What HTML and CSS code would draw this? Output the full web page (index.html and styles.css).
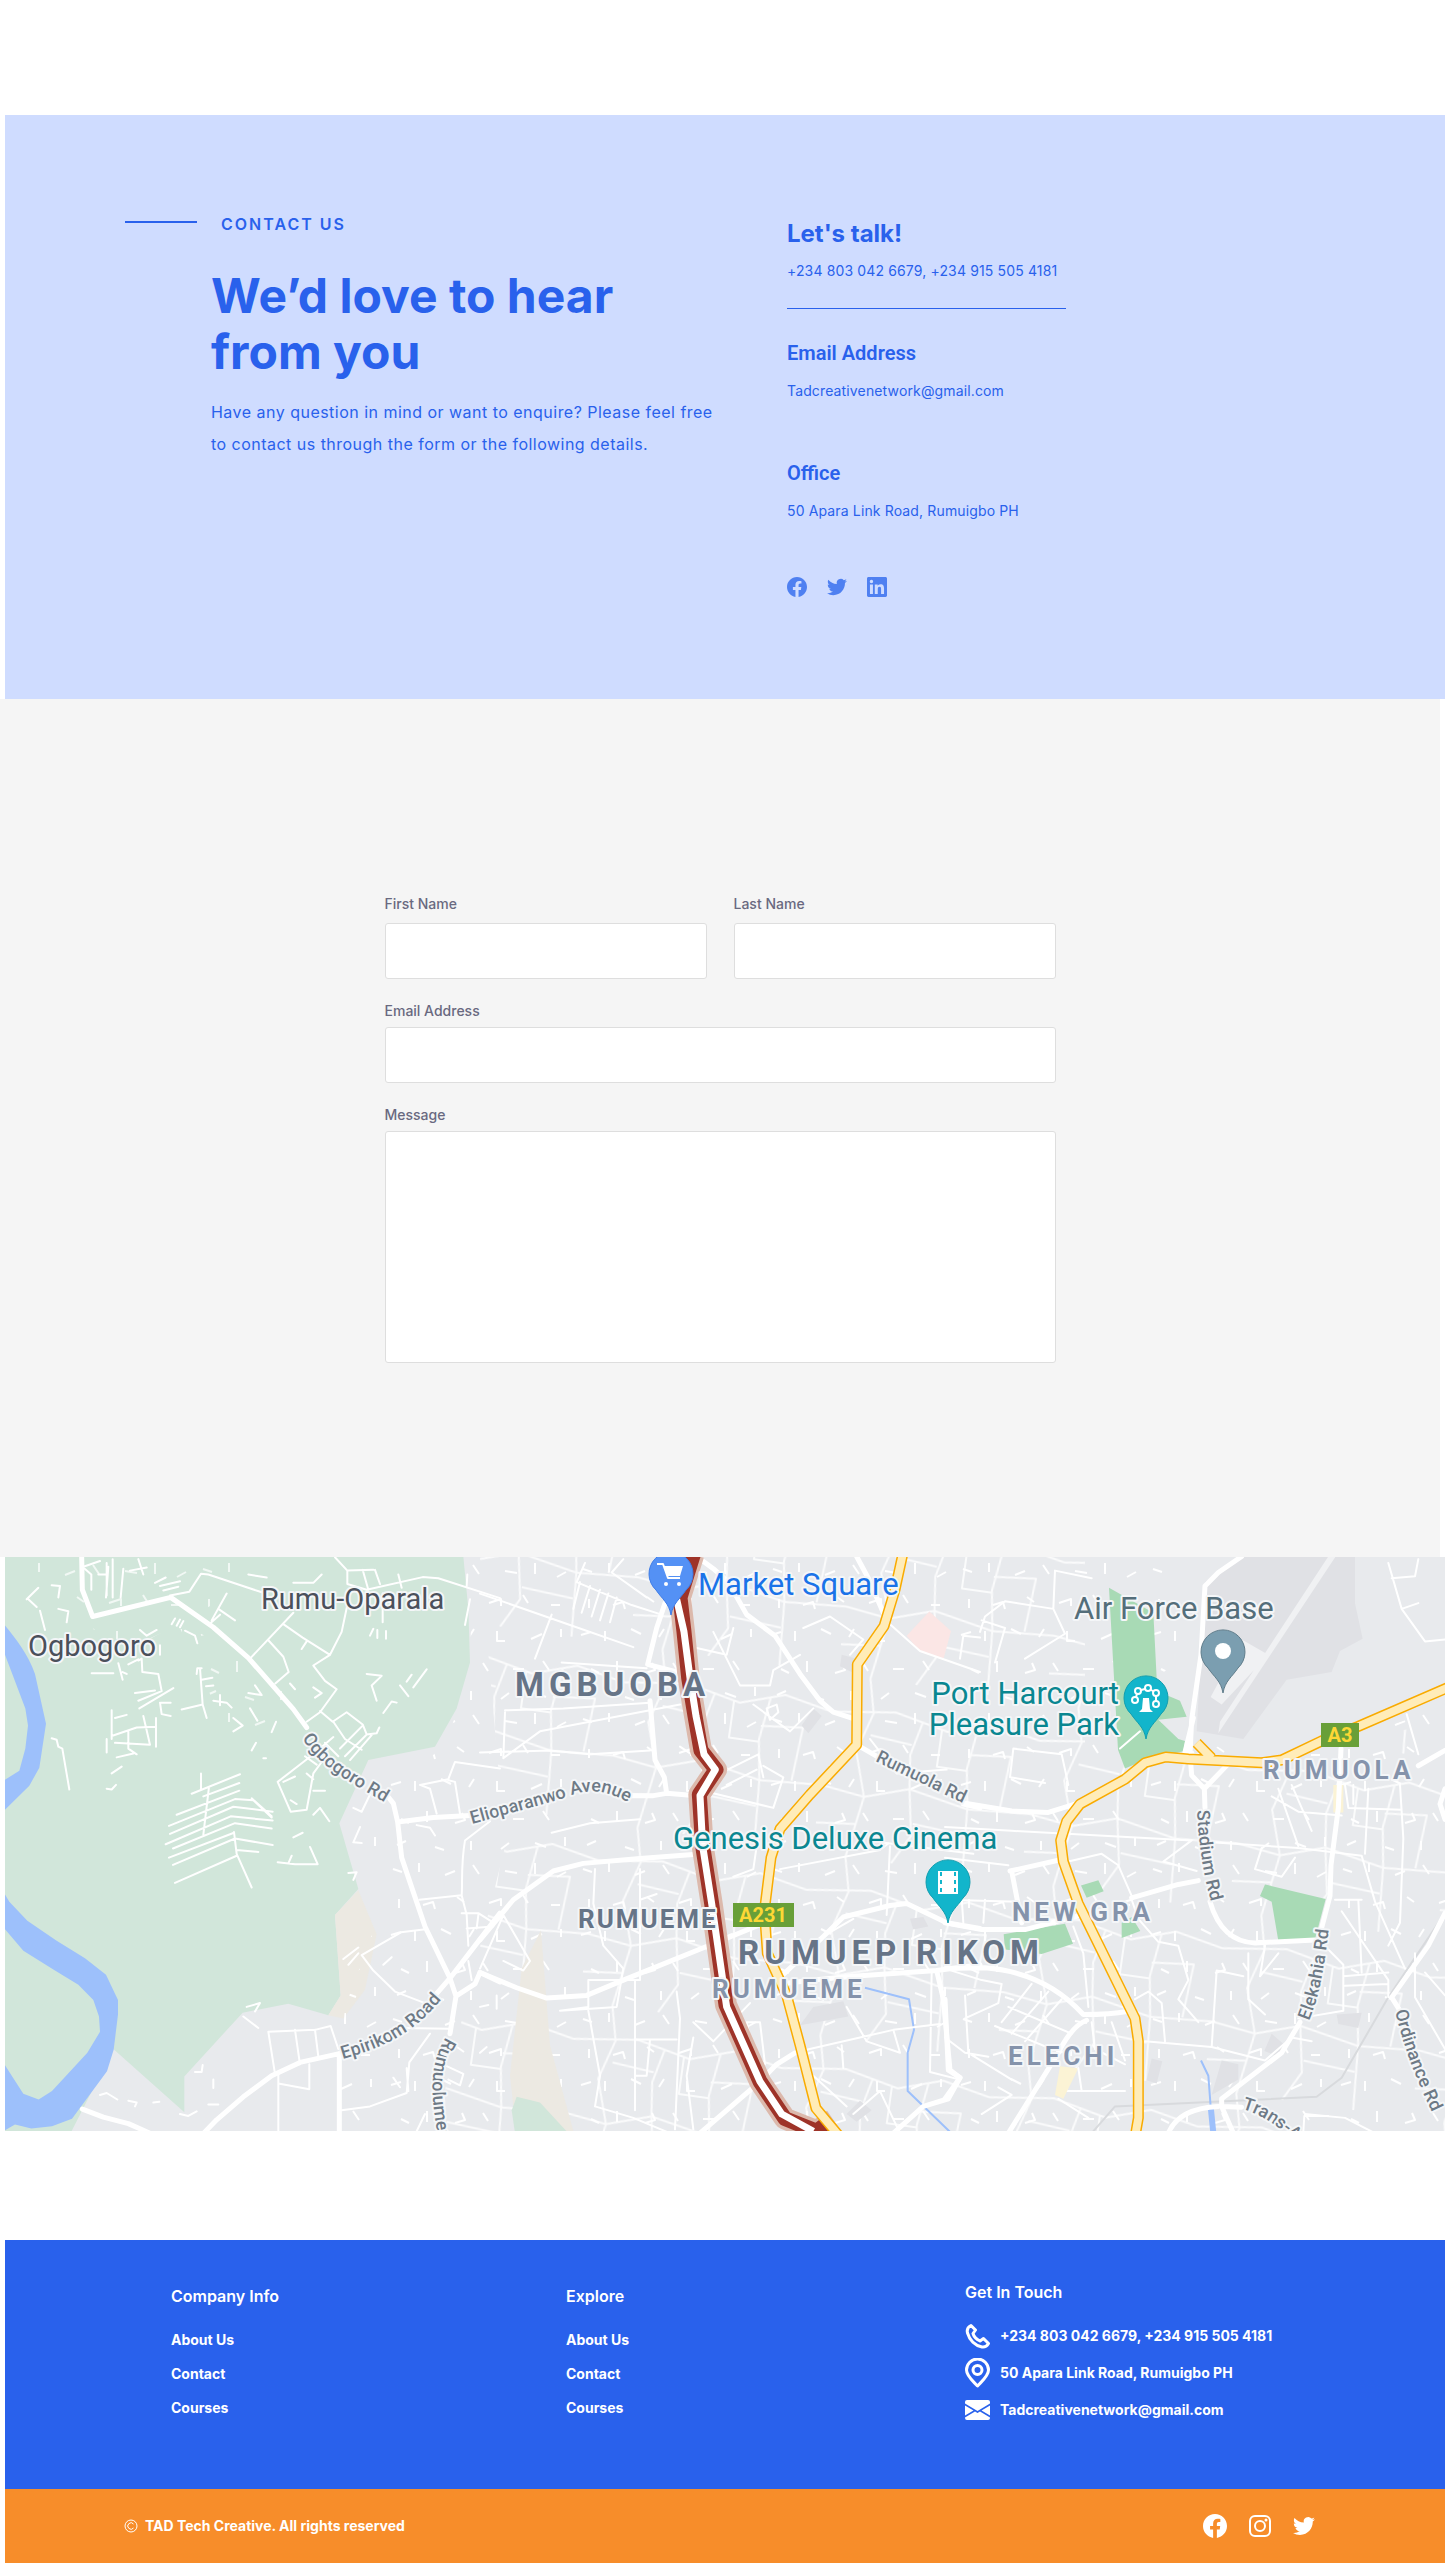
FILE: index.html
```html
<!DOCTYPE html>
<html lang="en">
<head>
<meta charset="utf-8">
<meta name="viewport" content="width=device-width, initial-scale=1">
<title>Contact us – TAD Tech Creative</title>
<link rel="stylesheet" href="styles.css">
</head>
<body>
<svg class="sprite" aria-hidden="true">
  <symbol id="facebook" viewBox="0 0 24 24"><path d="M24 12.073c0-6.627-5.373-12-12-12s-12 5.373-12 12c0 5.99 4.388 10.954 10.125 11.854v-8.385H7.078v-3.47h3.047V9.43c0-3.007 1.792-4.669 4.533-4.669 1.312 0 2.686.235 2.686.235v2.953H15.83c-1.491 0-1.956.925-1.956 1.874v2.25h3.328l-.532 3.47h-2.796v8.385C19.612 23.027 24 18.062 24 12.073z"/></symbol>
  <symbol id="twitter" viewBox="0 0 24 24"><path d="M23.953 4.57a10 10 0 01-2.825.775 4.958 4.958 0 002.163-2.723c-.951.555-2.005.959-3.127 1.184a4.92 4.92 0 00-8.384 4.482C7.69 8.095 4.067 6.13 1.64 3.162a4.822 4.822 0 00-.666 2.475c0 1.71.87 3.213 2.188 4.096a4.904 4.904 0 01-2.228-.616v.06a4.923 4.923 0 003.946 4.827 4.996 4.996 0 01-2.212.085 4.936 4.936 0 004.604 3.417 9.867 9.867 0 01-6.102 2.105c-.39 0-.779-.023-1.17-.067a13.995 13.995 0 007.557 2.209c9.053 0 13.998-7.496 13.998-13.985 0-.21 0-.42-.015-.63A9.935 9.935 0 0024 4.59z"/></symbol>
  <symbol id="linkedin" viewBox="0 0 24 24"><path d="M20.447 20.452h-3.554v-5.569c0-1.328-.027-3.037-1.852-3.037-1.853 0-2.136 1.445-2.136 2.939v5.667H9.351V9h3.414v1.561h.046c.477-.9 1.637-1.85 3.37-1.85 3.601 0 4.267 2.37 4.267 5.455v6.286zM5.337 7.433a2.062 2.062 0 01-2.063-2.065 2.064 2.064 0 112.063 2.065zm1.782 13.019H3.555V9h3.564v11.452zM22.225 0H1.771C.792 0 0 .774 0 1.729v20.542C0 23.227.792 24 1.771 24h20.451C23.2 24 24 23.227 24 22.271V1.729C24 .774 23.2 0 22.222 0h.003z"/></symbol>
</svg>

<main>
  <section class="hero">
    <div class="hero-intro">
      <p class="eyebrow"><span class="eyebrow-rule"></span>CONTACT US</p>
      <h1>We’d love to hear<br>from you</h1>
      <p class="lead">Have any question in mind or want to enquire? Please feel free to contact us through the form or the following details.</p>
    </div>
    <div class="hero-details">
      <h2>Let's talk!</h2>
      <p class="phones">+234 803 042 6679, +234 915 505 4181</p>
      <hr>
      <h3>Email Address</h3>
      <p class="detail">Tadcreativenetwork@gmail.com</p>
      <h3>Office</h3>
      <p class="detail">50 Apara Link Road, Rumuigbo PH</p>
      <div class="hero-social">
        <a href="#" aria-label="Facebook"><svg><use href="#facebook"/></svg></a>
        <a href="#" aria-label="Twitter"><svg><use href="#twitter"/></svg></a>
        <a href="#" aria-label="LinkedIn"><svg><use href="#linkedin"/></svg></a>
      </div>
    </div>
  </section>

  <section class="form-section">
    <form class="contact-form">
      <div class="form-row">
        <div class="field field-name"><label for="first">First Name</label><input id="first" type="text"></div>
        <div class="field field-name"><label for="last">Last Name</label><input id="last" type="text"></div>
      </div>
      <div class="field"><label for="email">Email Address</label><input id="email" type="email"></div>
      <div class="field"><label for="message">Message</label><textarea id="message"></textarea></div>
    </form>
  </section>

  <svg class="map" viewBox="0 0 1440 574" preserveAspectRatio="xMidYMid slice" role="img" aria-label="Map of Rumuigbo, Port Harcourt">
    <defs>
      <pattern id="lanes" width="190" height="150" patternUnits="userSpaceOnUse">
        <path class="lane" d="M8 12l9 3M34 6v9M60 18l10-4M88 8l6 9M120 14l12 2M150 6v11M172 20l9-5M14 42v9M38 48l10-3 2 7M72 40l7 5M104 46l12-4v7M138 38l5 8M166 48h9M6 78l10-3M30 84v-10M56 72l10 5M84 80l5-8M112 74v10h8M146 82l11-5M176 72v8M16 112l8 4M42 104v11M70 116l10-3-3-7M98 106l5 8M128 112h11M158 104l6 9M12 138l9-4M50 140l9 3M86 134v9M116 142l8-6M150 136l11 4M180 130v9"/>
      </pattern>
      <pattern id="blocks" width="210" height="180" patternUnits="userSpaceOnUse" patternTransform="rotate(8)">
        <path class="lane" d="M0 38L64 30 118 42 162 28 210 38M0 112L44 118 88 104 148 116 210 112M34 0L42 34 30 74 44 118 34 180M92 36L84 70 88 104 96 150 80 180M148 32L142 76 148 116 152 180M42 56L84 60M142 62L184 58 180 112M96 138L148 142M112 41V78H142M0 150L40 146"/>
      </pattern>
      <path id="pin" d="M0 42C-2 30-9 26-15 17A22 22 0 1 1 15 17C9 26 2 30 0 42Z"/>
      <path id="ogbogoro-rd" d="M297 181C318 214 345 224 392 253"/>
      <path id="epirikom-rd" d="M338 502C372 492 410 480 446 430"/>
      <path id="rumuolumeni-rd" d="M441 480C426 505 422 530 437 600"/>
      <path id="elioparanwo-av" d="M467 267L556 242C590 228 603 234 640 254"/>
      <path id="rumuola-rd" d="M870 204L970 252"/>
      <path id="stadium-rd" d="M1192 253C1194 290 1198 320 1212 366"/>
      <path id="elekahia-rd" d="M1304 464C1314 440 1320 410 1325 360"/>
      <path id="ordinance-rd" d="M1390 454C1400 495 1412 525 1436 574"/>
      <path id="trans-rd" d="M1237 552Q1262 558 1300 592"/>
    </defs>

    <rect width="1440" height="574" fill="#e8eaed"/>

    <!-- west: farmland, river, Ogbogoro -->
    <g class="sheet" transform="translate(-5 -17) scale(.33333 .3827)">
      <path fill="#d1e6da" d="M0 43H1390L1405 180 1410 320 1370 440 1305 540 1105 575 1018 740 1075 912 1005 980 1022 1190 985 1242 865 1212 728 1235 553 1402V1495L340 1330 200 1570H0Z"/>
      <path fill="#ece9e2" d="M1075 915L1005 980 1022 1190 985 1242 1030 1250 1095 1175 1130 1030Z"/>
      <path fill="#9dc0fb" d="M0 208C40 250 80 290 105 350L138 480 118 595 88 642 0 718V635L58 603 76 545 84 485 76 440 15 300 0 280Z"/>
      <path fill="#9dc0fb" d="M0 905L28 945 82 995 170 1047 255 1093 318 1136 354 1202V1240L341 1332 321 1388 216 1512 156 1532 94 1538 45 1527 0 1550V1352L70 1447 116 1462 156 1440 262 1340 300 1285 297 1245 280 1202 235 1162 160 1122 70 1073 0 1002Z"/>
      <path class="street" d="M250 70L300 55M320 60V145M338 50V150M295 90H320M318 150L325 70M370 75L362 150M254 75L274 90V130M390 80L440 72M415 50L430 90M480 120L540 108M465 112L497 98M490 132L535 122M510 145L568 135 603 88 625 90 790 138M745 90L800 98M880 112H940L965 90M1005 45L1042 80 1120 78M1042 80V115L1100 130 1268 97 1315 100 1500 152M1088 78L1105 130M1125 78L1140 115M1195 90L1205 125M1148 140V215M1402 90L1400 120M1410 155L1395 222M635 210L680 140M655 180L705 210M660 195L630 218M750 310L880 190M805 262L850 305 866 345 826 375M850 220L908 255 990 300 1025 240 1042 170M990 300L940 328 975 368 1010 390 960 450 920 475M905 285L920 265M80 155L115 125M85 155L110 175M120 185L135 235M155 118L180 120 175 150M175 180L205 186 200 215M420 235L440 250 470 235M415 315L425 310 427 345 475 350 485 395 415 420M480 275V300M275 348H340M355 322L368 365M385 325L415 312M380 350L368 345M600 335L608 430 545 443M590 350L592 335 605 335M608 430L620 465M605 365L637 360M618 382L640 380M405 400L465 393M418 440L520 387M480 425L485 455 512 460M483 425H512M335 445V520M345 465L380 457M335 512L410 490 468 488M345 530L450 535 430 460M385 500V545L410 560M468 465V540M350 568L400 558M320 520V555M155 518L170 522 175 540 187 545 208 652M603 610V650M575 663L720 612M610 670L718 635M627 645L610 770M530 718L718 655M507 747L705 677 760 680 815 725M510 768L700 697 818 710M497 795L692 722 818 733M519 806L705 740 815 754M507 830L702 765M519 849L705 780 818 797M525 896L710 825M702 763L710 820 755 908M710 810L775 815M755 675L815 722M833 842L885 847H953L930 802M865 845L875 825M880 777L908 765M960 447L998 475 1040 450 1088 482 1100 508 1130 505 1138 490M1000 475L1035 520 1085 548M1088 485L1020 545M1098 510L1035 565M1115 510L1050 575M1000 515L940 560 833 632 872 710 920 705 940 610 965 580M975 530L1015 565M915 565L950 587M850 632L885 618M920 610L940 625M872 680L890 690M940 655L975 655M940 718L960 700 988 735M1100 350L1145 355 1115 380 1130 420M1240 385L1280 338M1220 370L1235 352M1200 380L1225 408M1150 452L1175 422 1190 425M745 400L785 405 765 380M755 550L768 530M750 440L772 472M700 465L728 485 700 500M790 570H798M815 502L828 475M870 375L885 390M940 385L965 400 945 412M555 237L585 250 592 270M515 220L525 205M530 224L540 208M540 228L550 212M1110 250L1120 232M1132 256V235M1158 258V238M640 420L680 425 695 438M660 405V432M320 650L335 652 348 640M335 610L365 592"/>
      <path class="street" d="M1260 640L1345 625 1365 580 1500 597M1260 640L1290 650 1310 715M1345 628L1365 632 1380 715M1395 785L1470 735M1395 785C1382 850 1388 900 1385 928L1258 940M1385 928L1400 980 1405 1060M1085 1085L1203 1025 1270 1018M1085 1085L1120 1125 1185 1180 1275 1210M1075 1080L1045 1110M1030 1095L1075 1065M1150 1110L1175 1090M1385 975L1435 975 1480 1000M1400 1015L1480 1010M1435 980L1430 1015M1405 1100L1415 1150M805 1285L945 1280 992 1270 1015 1330M805 1285L825 1395M885 1280L900 1370M945 1280L955 1350M835 1395V1550M835 1420L928 1435V1370M1025 1490L1110 1480 1220 1445 1228 1365 1290 1290M1220 1380L1225 1440M1180 1405L1200 1430M1210 1275L1348 1277M730 1245L775 1275M740 1220L780 1210 765 1232M585 1390H605L608 1372M625 1475H655M640 1410V1432M460 1470L478 1468M300 1450L320 1445 352 1462M385 1465L410 1470 405 1480M540 1500L565 1505 590 1493M1275 1500L1250 1545M1440 1220L1465 1215M1490 1190V1225M1340 1375L1390 1395 1380 1425 1345 1410M1440 1340L1460 1325M1060 700L1085 710 1110 665M1080 750L1060 790 1085 792M1250 745L1290 752 1305 772M1045 870L1070 868 1060 888"/>
      <path class="avenue" d="M245 43L247 130 278 200 512 150 640 228 745 308 880 442 920 490M1165 672L1180 688 1193 737 1205 830 1240 920 1275 1010 1350 1145 1368 1192 1350 1290M1193 737L1300 725 1410 720M1350 1145L1500 975M1368 1192L1425 1160 1440 1130 1500 1155M247 1487L310 1508 385 1525 450 1550M600 1560L650 1515 730 1455 815 1400 900 1365 1018 1342M1018 1342V1550M1300 1195L1350 1145"/>
    </g>

    <!-- small lanes over the built-up areas -->
    <path fill="url(#lanes)" d="M465 0H1160V60H1220L1120 150 1260 210 1440 150V574H330L340 450 385 330 350 250 440 190 466 110Z"/>
    <path fill="url(#blocks)" opacity=".8" d="M475 0H1080V190L1260 200 1440 165V574H430L460 450 500 290Z"/>
    <path fill="url(#lanes)" opacity=".7" d="M20 0H240V30L130 90 60 60ZM170 60L280 130 270 180 220 170Z"/>

    <!-- centre -->
    <g class="sheet" transform="translate(475 -17) scale(.33333 .3827)">
      <path fill="#ece9e2" d="M183 1020L125 1120 90 1400 110 1560H285L210 1320Z"/>
      <path fill="#d1e6da" d="M110 1455L180 1470 265 1550H105L95 1490Z"/>
      <path fill="#fbe6e5" d="M1348 187L1413 238 1390 312 1320 292 1280 250Z"/>
      <path fill="#e0e1e5" d="M1000 1220L1090 1205 1105 1245 960 1268ZM1290 990L1330 985 1345 1010 1300 1018ZM1140 1465L1175 1490 1130 1520 1100 1500ZM1085 300L1130 310 1115 345 1080 330ZM1000 440L1025 460 985 505 965 485Z"/>
      <path class="river" d="M1155 1170L1287 1200 1302 1280 1283 1340V1440L1420 1555"/>
      <path class="street" d="M0 140L270 222 460 280M315 60L290 110 455 170 545 195M300 110L280 180M330 120L305 190M360 130L335 200M385 140L360 210M410 150L390 215M245 320L500 335M75 445L250 440 510 425M75 450L70 570M70 570L180 500 600 430M430 50L395 85 500 150M215 195L165 310M0 555L210 550 330 560 510 550M215 765L330 740 480 730M345 860L340 950 370 1060 430 1120 410 1220 240 1230 325 1220V1150H480V860M480 940L530 925M0 1120L70 980 150 1100 130 1125 70 1100M465 1150V1490M465 1305H590M590 1180L600 1250 585 1540M510 1305L500 1400H465M345 1480L360 1400 325 1230M345 1480L460 1510 570 1550M600 540L720 610 835 560 850 620M740 640L830 600M690 660L880 700 910 620 850 590M760 880L820 860 830 800M1000 1050L1120 990M970 230L1050 200 1150 260 1110 300M640 280L740 300 760 230M700 240L780 380 870 380 880 340 960 300M860 440L890 430 895 450 870 470ZM820 430L930 500 1000 440M1050 590L1120 560M940 1340L1240 1280 1380 1265M1100 1220L1160 1310 1260 1340 1240 1280M1085 1320L1090 1380M1355 1130L1350 1390 1440 1410M1120 1500L1200 1440 1260 1550M1000 1400L1100 1480M1170 520L1250 610 1400 600M1230 800L1220 980M1200 790L1480 820M900 860L1200 810M1440 870L1450 1000M640 1260L700 1310 810 1210M640 1300L620 1400 640 1540M800 1260L840 1260 855 1370 830 1380ZM1230 220L1320 290 1500 345M1450 250L1500 255M1450 250L1440 310"/>
      <path class="avenue" d="M555 165L530 230 503 325 590 345 635 355M510 420L525 575 553 620 560 662M440 668L520 668 560 662 650 668M650 43L700 75 745 110 800 195 885 250 960 350 1020 420 1060 450 1125 468M1130 43L1165 100 1210 190M1140 540L1200 570M1450 690L1500 700M0 1045L100 940 220 865 310 845 480 832 670 820M0 1130L110 1170 200 1197 320 1190 430 1150 700 1055 840 1005M910 1135L990 1070 1090 985 1230 955 1280 950 1400 1000 1500 1015M900 1160L1000 1150 1120 1140 1370 1125 1500 1110M1370 1125L1390 1200 1410 1385 1440 1405 1405 1460 1330 1480 1240 1550M945 1340L890 1370 840 1415 660 1550"/>
      <path class="traffic-halo" d="M640 38L600 150 612 240 626 360 645 460 663 550 708 600 658 665 668 800 695 950 738 1215 840 1415 915 1512 1010 1545 1060 1515"/>
      <path class="traffic" d="M640 38L600 150 612 240 626 360 645 460 663 550 708 600 658 665 668 800 695 950 738 1215 840 1415 915 1512 1010 1545 1040 1525"/>
      <path class="artery" d="M590 155L612 240 630 360 648 460 672 560 706 600 660 668 668 800 695 950 740 1220 840 1415 905 1500 1000 1545"/>
      <path class="highway-edge" d="M1268 38L1245 130 1212 225 1132 325 1130 535 990 665 900 755 873 830 853 970 862 1080 920 1190 960 1320 1008 1485 1080 1560"/>
      <path class="highway" d="M1268 38L1245 130 1212 225 1132 325 1130 535 990 665 900 755 873 830 853 970 862 1080 920 1190 960 1320 1008 1485 1080 1560"/>
    </g>

    <!-- east -->
    <g class="sheet" transform="translate(940 -17) scale(.33333 .3827)">
      <path fill="#e0e1e5" d="M880 43H1230V165L1253 258 1185 290 1160 345 1025 365 895 520 755 500 780 110Z"/>
      <path fill="#f0f1f3" d="M1150 43H1172L820 505 825 475ZM890 260L970 300 830 430 797 410Z"/>
      <path fill="#a8dab5" d="M492 125L625 190 637 395 705 420 725 462 640 470 700 520 720 525 715 552 600 575 540 597 519 548Z"/>
      <path fill="#a8dab5" d="M960 900L1142 938 1110 1043 1000 1047 980 945 945 930ZM408 903L460 889 476 918 425 935ZM176 1030L360 1003 384 1055 290 1082 180 1070ZM530 1000L560 985 586 1022 530 1040Z"/>
      <path fill="#fbf3d5" d="M345 1375L400 1380 355 1460 330 1450ZM1165 640H1195V712H1165Z"/>
      <path fill="#e0e1e5" d="M980 1290L1020 1320 1000 1350 958 1335ZM830 1360L880 1370V1410L800 1450ZM620 1355L652 1362 635 1420 605 1412ZM1175 1240L1250 1235 1240 1275 1180 1265Z"/>
      <path class="railway" d="M440 1550L510 1480 1115 1455 1190 1405 1330 1195 1500 975"/>
      <path class="river" d="M768 1360L790 1400 803 1550"/>
      <path class="river river-wide" d="M797 1480L805 1550"/>
      <path class="street" d="M525 545L585 500M205 545L195 620 300 635M205 545L350 560 370 640M110 210L180 230 150 320M105 240L120 200 180 160 325 180 360 245 240 310M325 180L330 80 440 100M0 750L200 760 740 785M655 840L740 785M655 840L755 865M800 790L1060 805 1250 825M930 860L950 805M930 860L1010 880 1050 830M470 820L370 840M470 820L520 850 560 930M560 940L580 990 640 1050 700 1060 730 1150 700 1200 760 1260M600 1310L800 1325 815 1125 895 1140M800 1325L960 1360 1040 1300 1100 1310M570 1200L610 1180 650 1210 660 1310M910 1080V1200L960 1240M960 1060L945 1140 1000 1080M1150 1070L1195 1110V1230L1060 1250M1190 970L1330 1150V1195M1250 825L1290 945 1380 1120M1270 650L1260 820M1365 640L1375 780 1365 1000 1330 1060M1200 640L1210 700 1370 705M1225 640V690M980 670L1060 710 1190 720M1000 650L1060 800M1040 640L1100 760M1385 455L1420 560M1330 60L1370 180 1440 265 1500 260M1370 180L1420 165M1340 100L1410 95 1420 50M1410 1080L1410 1195 1500 1330M1440 1130L1500 1190M0 1120L110 1150 170 1160 160 1210 60 1250M60 1190L70 1340 200 1410M170 1260L260 1160M200 1290L310 1180M240 1310L350 1200M150 1270L320 1330M190 1220L380 1290M110 1500L200 1450 160 1430M340 1460L430 1510M380 1440L540 1440M400 1380L410 1440M500 1260L540 1360M440 1260L450 1330 540 1370M0 1300L60 1340 130 1350M0 830L190 850M120 940L115 1000M0 940L220 945M385 1010L415 1080M415 1080L430 1220M560 940L520 950M1080 1500L1200 1510 1290 1550M1195 1140L1330 1130M1200 1165L1330 1160M1240 940L1250 1130M1170 940H1250M1075 1545L1078 1505 1150 1505"/>
      <path class="avenue" d="M890 43L820 85 780 120 768 300 740 470 735 560 740 615 778 650 780 700M778 650L850 585M745 465L720 555M60 688L200 708 310 712 390 690M195 865L350 835M200 865L230 1000M0 1000L110 1018 240 1018 410 980M560 935L700 900 760 890M795 945Q830 1050 930 1053L1110 1045M1188 545L1180 700 1158 850 1155 930 1125 1030M1065 1260L1010 1340 830 1460V1480L870 1560M830 1480L890 1482M1340 1195L1450 1060 1500 975M1340 1195L1365 1230M1420 590L1500 550M1500 650L1485 690 1500 730M0 1120L120 1118Q300 1130 415 1240 500 1240 545 1232M425 1255Q380 1270 340 1340L190 1550M0 1200L10 1385 45 1405 0 1460M670 1550Q700 1485 820 1480"/>
      <path class="highway-edge" d="M1510 385L1240 487 1130 525 1010 575 950 582 730 572 662 567 600 582 540 625 405 690 365 735 347 785 355 840 400 950 570 1250 580 1310V1510L570 1560M755 530L800 570"/>
      <path class="highway" d="M1510 385L1240 487 1130 525 1010 575 950 582 730 572 662 567 600 582 540 625 405 690 365 735 347 785 355 840 400 950 570 1250 580 1310V1510L570 1560M755 530L800 570"/>
    </g>

    <!-- road names -->
    <g class="road-name">
      <text><textPath href="#ogbogoro-rd">Ogbogoro Rd</textPath></text>
      <text><textPath href="#epirikom-rd">Epirikom Road</textPath></text>
      <text><textPath href="#rumuolumeni-rd">Rumuolumeni</textPath></text>
      <text><textPath href="#elioparanwo-av">Elioparanwo Avenue</textPath></text>
      <text><textPath href="#rumuola-rd">Rumuola Rd</textPath></text>
      <text><textPath href="#stadium-rd">Stadium Rd</textPath></text>
      <text><textPath href="#elekahia-rd">Elekahia Rd</textPath></text>
      <text><textPath href="#ordinance-rd">Ordinance Rd</textPath></text>
      <text><textPath href="#trans-rd">Trans-A</textPath></text>
    </g>

    <!-- places -->
    <g class="town"><text x="23" y="99">Ogbogoro</text><text x="256" y="52">Rumu-Oparala</text></g>
    <g class="district district-large"><text x="510" y="139">MGBUOBA</text><text x="733" y="407">RUMUEPIRIKOM</text></g>
    <g class="district district-mid"><text x="573" y="371">RUMUEME</text></g>
    <g class="district district-small"><text x="707" y="441">RUMUEME</text><text x="1258" y="222">RUMUOLA</text><text x="1007" y="364">NEW GRA</text><text x="1003" y="508">ELECHI</text></g>
    <text class="place place-shop" x="693" y="38">Market Square</text>
    <g class="place place-fun">
      <text x="1114" y="147" text-anchor="end">Port Harcourt</text>
      <text x="1114" y="178" text-anchor="end">Pleasure Park</text>
      <text x="668" y="292">Genesis Deluxe Cinema</text>
    </g>
    <text class="place place-base" x="1069" y="62">Air Force Base</text>
    <rect x="728" y="346" width="61" height="24" fill="#689f38"/>
    <text class="shield" x="758" y="365">A231</text>
    <rect x="1316" y="166" width="38" height="24" fill="#689f38"/>
    <text class="shield" x="1335" y="185">A3</text>

    <g transform="translate(666 16)"><use href="#pin" fill="#5491f5" stroke="#3f7de8"/><path d="M-14-9h6l5 14H9" fill="none" stroke="#fff" stroke-width="2"/><path d="M-7-7H12L9 3H-4Z" fill="#fff"/><circle cx="-5" cy="11" r="2" fill="#fff"/><circle cx="8" cy="11" r="2" fill="#fff"/></g>
    <g transform="translate(943 324)"><use href="#pin" fill="#12b5cb" stroke="#129eaf"/><path fill="#fff" d="M-10-10H10V13H-10Z"/><path d="M-7-9V12M7-9V12" stroke="#12b5cb" stroke-width="2" stroke-dasharray="4 4"/></g>
    <g transform="translate(1141 140)"><use href="#pin" fill="#12b5cb" stroke="#129eaf"/><path d="M-3 1H3L4 12 7 15H-7L-4 12Z" fill="#fff"/><path d="M-11 3L-8-6 2-9 10-4 10 7" fill="none" stroke="#fff" stroke-width="2"/><g fill="#12b5cb" stroke="#fff" stroke-width="2"><circle cx="-11" cy="3" r="3"/><circle cx="-8" cy="-6" r="3"/><circle cx="2" cy="-9" r="3"/><circle cx="10" cy="-4" r="3"/><circle cx="10" cy="7" r="3"/></g></g>
    <g transform="translate(1218 94)"><use href="#pin" fill="#7b9eb0" stroke="#607d8b"/><circle r="8" fill="#fff"/></g>
  </svg>
</main>

<footer>
  <div class="footer-main">
    <nav class="footer-col" aria-label="Company Info"><h4>Company Info</h4><a href="#">About Us</a><a href="#">Contact</a><a href="#">Courses</a></nav>
    <nav class="footer-col" aria-label="Explore"><h4>Explore</h4><a href="#">About Us</a><a href="#">Contact</a><a href="#">Courses</a></nav>
    <div class="footer-touch">
      <h4>Get In Touch</h4>
      <p><svg viewBox="0 0 25 30"><path class="outline" d="M6 4.500C3 6 1.500 8 2.500 12 4.500 19 10 24.500 17 26 20 26.500 22 25 23.500 22.500L18.500 17.500 15 20C12 18.500 9 16 8 12.500L10.500 9Z"/></svg>+234 803 042 6679, +234 915 505 4181</p>
      <p><svg viewBox="0 0 25 30"><path class="outline" d="M12.500 28C8 23 1.500 18 1.500 12A11 11 0 0 1 23.500 12C23.500 18 17 23 12.500 28Z"/><circle class="outline" cx="12.500" cy="12" r="4.500"/></svg>50 Apara Link Road, Rumuigbo PH</p>
      <p><svg viewBox="0 0 25 30"><path d="M2 5H23Q25 5 25 7V8.500L12.500 16 0 8.500V7Q0 5 2 5ZM0 10.500L8.500 15.500 0 20.500ZM25 10.500V20.500L16.500 15.500ZM10 16.500L12.500 18 15 16.500 25 22.500V23Q25 25 23 25H2Q0 25 0 23V22.500Z"/></svg>Tadcreativenetwork@gmail.com</p>
    </div>
  </div>
  <div class="footer-bar">
    <p><svg viewBox="0 0 14 14"><circle cx="7" cy="7" r="6"/><path d="M9.500 5A3.200 3.200 0 1 0 9.500 9"/></svg>TAD Tech Creative. All rights reserved</p>
    <div class="footer-social">
      <a href="#" aria-label="Facebook"><svg><use href="#facebook"/></svg></a>
      <a href="#" aria-label="Instagram"><svg viewBox="0 0 24 24"><rect class="insta" x="2" y="2" width="20" height="20" rx="5"/><circle class="insta" cx="12" cy="12" r="5"/><circle cx="18" cy="6" r="1.500"/></svg></a>
      <a href="#" aria-label="Twitter"><svg><use href="#twitter"/></svg></a>
    </div>
  </div>
</footer>
</body>
</html>
```
FILE: styles.css
```css
* { box-sizing: border-box; }
body {
  margin: 0;
  padding-top: 115px;
  background: #fff;
  color: #2961ec;
  font-family: Inter, "Liberation Sans", sans-serif;
}
h1, h2, h3, h4, p { margin: 0; }
a { color: inherit; text-decoration: none; }
svg { display: block; }
.sprite { position: absolute; width: 0; height: 0; }

/* Hero */
.hero {
  display: grid;
  grid-template-columns: minmax(0, 662px) 1fr;
  margin-left: 5px;
  padding: 97px 120px 102px;
  background: #cfdcff;
}
.hero-intro { padding-right: 64px; }
.eyebrow {
  display: flex;
  align-items: center;
  gap: 24px;
  font-size: 16px;
  line-height: 24px;
  font-weight: 600;
  letter-spacing: 2px;
}
.eyebrow-rule { width: 72px; height: 2px; margin-bottom: 4px; background: #2961ec; }
h1 {
  margin: 32px 0 16px 86px;
  font-size: 48px;
  line-height: 56px;
  font-weight: 700;
}
.lead {
  margin-left: 86px;
  font-size: 16px;
  line-height: 32px;
  letter-spacing: .03em;
}
.hero-details { padding-top: 6px; }
h2 { font-size: 24px; line-height: 32px; font-weight: 700; }
.phones { margin-top: 9px; }
.phones, .detail { font-size: 14px; line-height: 24px; letter-spacing: .01em; }
hr {
  width: 279px;
  height: 1px;
  margin: 25px 0 32px;
  border: 0;
  background: #2961ec;
}
h3 {
  margin-bottom: 14px;
  font: 600 20px/24px Roboto, sans-serif;
}
.detail + h3 { margin-top: 58px; }
.hero-social { display: flex; gap: 20px; margin-top: 54px; }
.hero-social svg { width: 20px; height: 20px; fill: #4f80f1; }

/* Form */
.form-section { margin-right: 5px; padding: 195px 24px 194px; background: #f5f5f5; }
.contact-form {
  display: flex;
  flex-direction: column;
  gap: 22px;
  max-width: 671px;
  margin: 0 auto;
}
.form-row { display: flex; gap: 27px; }
.field { display: flex; flex: 1; flex-direction: column; gap: 6px; min-width: 0; }
.field-name { gap: 9px; }
label { color: #696980; font-size: 14px; line-height: 20px; font-weight: 500; }
input, textarea {
  display: block;
  width: 100%;
  height: 56px;
  padding: 12px 16px;
  border: 1px solid #dedede;
  border-radius: 3px;
  background: #fff;
  font: inherit;
}
textarea { height: 232px; resize: none; }

/* Map */
.map { width: calc(100% - 5px); height: 574px; margin-left: 5px; }
.map path { stroke-linejoin: round; }
.sheet path { vector-effect: non-scaling-stroke; }
.lane { fill: none; stroke: #fff; stroke-width: 2; }
.street { fill: none; stroke: #fff; stroke-width: 2; stroke-linecap: round; }
.avenue { fill: none; stroke: #fff; stroke-width: 5; stroke-linecap: round; }
.river { fill: none; stroke: #9dc0fb; stroke-width: 2; }
.river-wide { stroke-width: 6; }
.railway { fill: none; stroke: #d8dadd; stroke-width: 2; }
.traffic-halo { fill: none; stroke: #dcb9ac; stroke-width: 22; }
.traffic { fill: none; stroke: #9e3328; stroke-width: 15; }
.artery { fill: none; stroke: #fff; stroke-width: 7; }
.highway-edge { fill: none; stroke: #f9ab00; stroke-width: 11; }
.highway { fill: none; stroke: #ffecb8; stroke-width: 8; }
.map text {
  font-family: Roboto, sans-serif;
  stroke: #f4f6f8;
  stroke-width: 4px;
  stroke-linejoin: round;
  paint-order: stroke;
}
.road-name { fill: #6e7a86; font-size: 18px; font-weight: 500; }
.town { fill: #4b505b; font-size: 29px; }
.place { font-size: 31px; }
.place-shop { fill: #1a73e8; }
.place-fun { fill: #0a8791; }
.place-base { fill: #546e7a; }
.district { font-weight: 700; }
.district-large { fill: #667487; font-size: 33px; letter-spacing: 5px; }
.district-mid { fill: #667487; font-size: 26px; letter-spacing: 2px; }
.district-small { fill: #8593ab; font-size: 26px; letter-spacing: 4px; }
.map .shield { fill: #fdd835; stroke: none; font-size: 20px; font-weight: 700; text-anchor: middle; }

/* Footer */
footer { margin: 109px 0 0 5px; color: #fff; font-weight: 700; }
.footer-main {
  display: grid;
  grid-template-columns: 395fr 399fr 480fr;
  padding: 40px 0 64px 166px;
  background: #2961ec;
}
h4 { font-size: 16px; line-height: 24px; font-weight: 600; }
.footer-col { display: flex; flex-direction: column; align-items: flex-start; gap: 10px; padding-top: 4px; }
.footer-col h4 { margin-bottom: 10px; }
.footer-col a, .footer-touch p, .footer-bar p { font-size: 14px; line-height: 24px; }
.footer-touch { display: flex; flex-direction: column; gap: 7px; }
.footer-touch h4 { margin-bottom: 10px; }
.footer-touch p { display: flex; align-items: center; gap: 10px; }
.footer-touch svg { width: 25px; height: 30px; fill: #fff; }
.footer-touch .outline { fill: none; stroke: #fff; stroke-width: 3; stroke-linejoin: round; }
.footer-bar {
  display: flex;
  align-items: center;
  justify-content: space-between;
  padding: 25px 130px 25px 119px;
  background: #f78d2a;
}
.footer-bar p { display: flex; align-items: center; gap: 7px; }
.footer-bar p svg { width: 14px; height: 14px; fill: none; stroke: #fff; }
.footer-social { display: flex; align-items: center; gap: 21px; }
.footer-social svg { width: 24px; height: 24px; fill: #fff; }
.footer-social a:last-child svg { width: 22px; height: 22px; }
.footer-social .insta { fill: none; stroke: #fff; stroke-width: 2; }
```
